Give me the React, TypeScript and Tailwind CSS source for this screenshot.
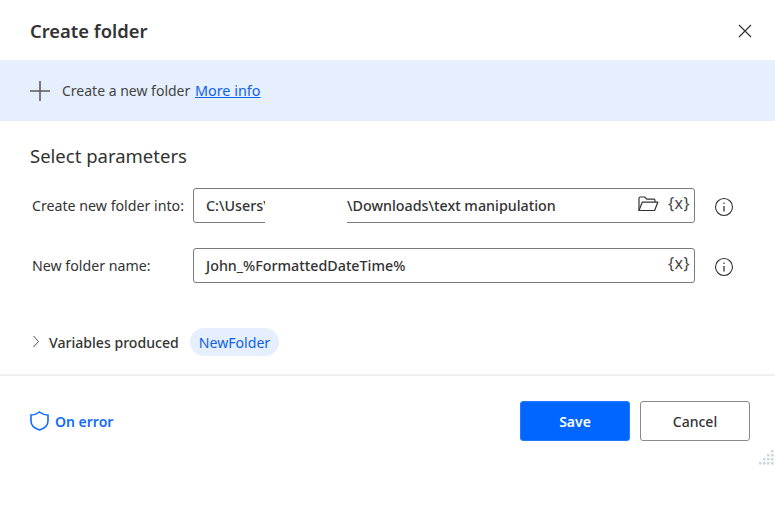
const font = { fontFamily: '"Noto Sans", sans-serif' };

function VarIcon() {
  return <span className="text-[16px] leading-none text-[#444] tracking-[0.5px] font-normal mt-[1px]">{"{x}"}</span>;
}

function Info() {
  return (
    <svg width="20" height="20" viewBox="0 0 20 20" fill="none" stroke="#333" strokeWidth="1.1" className="shrink-0">
      <circle cx="10" cy="10" r="8.5" />
      <path d="M10 9v5.5" strokeWidth="1.3" />
      <circle cx="10" cy="6.3" r="0.8" fill="#333" stroke="none" />
    </svg>
  );
}

function Row({ label, children, icons }: { label: string; children: React.ReactNode; icons: React.ReactNode }) {
  return (
    <div className="flex items-center h-[35px]">
      <div className="w-[163px] pl-[2px] text-[14.2px] text-[#333]">{label}</div>
      <div className="relative w-[502px] h-[35px] rounded-[3px] border border-[#7a7a7a] flex items-center pl-[12px] text-[14.3px] text-[#333] font-medium">
        {children}
        <div className="absolute right-[4px] top-[5px] flex items-start gap-[9px]">{icons}</div>
      </div>
      <div className="ml-[19px] mt-[3px]"><Info /></div>
    </div>
  );
}

function Folder() {
  return (
    <svg width="21" height="16" viewBox="0 0 21 16" fill="none" stroke="#333" strokeWidth="1.2" className="mt-[2px]">
      <path d="M1 14.5V2.2C1 1.500 1.500 1 2.200 1h4.600l2 2.200h7c.7 0 1.200.5 1.200 1.200V6" />
      <path d="M1 14.500 4.200 6.200h15.600l-3.200 8.300z" strokeLinejoin="round" />
    </svg>
  );
}

const grip: [number, number][] = [
  [12, 0],
  [8, 4], [12, 4],
  [4, 8], [8, 8], [12, 8],
  [0, 12], [4, 12], [8, 12], [12, 12],
];

export default function App() {
  return (
    <div className="w-[775px] h-[512px] bg-white relative overflow-hidden" style={font}>
      <header className="h-[60px] flex items-center justify-between pl-[30px] pr-[23px]">
        <h1 className="text-[18.4px] font-semibold text-[#333] mt-[2px]">Create folder</h1>
        <svg width="14" height="14" viewBox="0 0 14 14" stroke="#333" strokeWidth="1.2" fill="none" className="mt-[2px]">
          <path d="M1 1l12 12M13 1 1 13" />
        </svg>
      </header>

      <div className="h-[61px] bg-[#e5effd] flex items-center pl-[30px] gap-[13px]">
        <svg width="20" height="20" viewBox="0 0 20 20" stroke="#5c5c5c" strokeWidth="1.600" fill="none">
          <path d="M10 0v20M0 10h20" />
        </svg>
        <p className="text-[14px] text-[#444] -ml-[1px]">
          Create a new folder <a className="text-[#0f62e6] underline text-[14.400px] ml-[1px]">More info</a>
        </p>
      </div>

      <h2 className="pl-[30px] mt-[22px] text-[18.500px] leading-[26px] text-[#333]">Select parameters</h2>

      <div className="pl-[30px] mt-[19px] flex flex-col gap-[25px]">
        <Row label="Create new folder into:" icons={<><Folder /><VarIcon /></>}>
          <span>C:\Users\</span>
          <span className="absolute left-[71px] w-[82px] top-0 -bottom-px bg-white" />
          <span className="absolute left-[153px]">\Downloads\text manipulation</span>
        </Row>
        <Row label="New folder name:" icons={<VarIcon />}>
          <span>John_%FormattedDateTime%</span>
        </Row>
      </div>

      <div className="pl-[30px] mt-[45px] flex items-center h-[28px]">
        <svg width="10" height="14" viewBox="0 0 10 14" fill="none" stroke="#555" strokeWidth="1" className="-mt-[1px]">
          <path d="M3.500 1l5 5.500-5 5.500" />
        </svg>
        <span className="ml-[9px] mt-[1px] text-[14.100px] font-medium text-[#333]">Variables produced</span>
        <span className="ml-[11px] h-[28px] pt-[1px] px-[9px] rounded-[14px] bg-[#e5effd] text-[#0f62e6] text-[14.100px] flex items-center">NewFolder</span>
      </div>

      <div className="mt-[18px] border-t-2 border-[#f0f0f0]" />

      <footer className="mt-[25px] pl-[30px] pr-[25px] flex items-center justify-between h-[40px]">
        <div className="flex items-center gap-[6px]">
          <svg width="19" height="20" viewBox="0 0 19 20" fill="none" stroke="#0f6cff" strokeWidth="1.600">
            <path d="M9.500 1C7 3 4.500 4 1 4v6c0 4 3.500 7.500 8.500 9 5-1.500 8.500-5 8.500-9V4c-3.500 0-6-1-8.500-3z" />
          </svg>
          <span className="text-[14px] font-semibold text-[#0f6cff]">On error</span>
        </div>
        <div className="flex gap-[10px]">
          <button className="w-[110px] h-[40px] rounded-[3px] bg-[#0066ff] border border-[#1f7bff] text-white text-[14px] font-semibold">Save</button>
          <button className="w-[110px] h-[40px] rounded-[3px] bg-white border border-[#8a8a8a] text-[#333] text-[14px] font-medium">Cancel</button>
        </div>
      </footer>

      <svg width="15" height="15" viewBox="0 0 15 15" fill="#ced5df" className="absolute left-[759px] top-[450px]">
        {grip.map(([x, y]) => (
          <rect key={`${x}-${y}`} x={x} y={y} width="2.500" height="2.500" />
        ))}
      </svg>
    </div>
  );
}
